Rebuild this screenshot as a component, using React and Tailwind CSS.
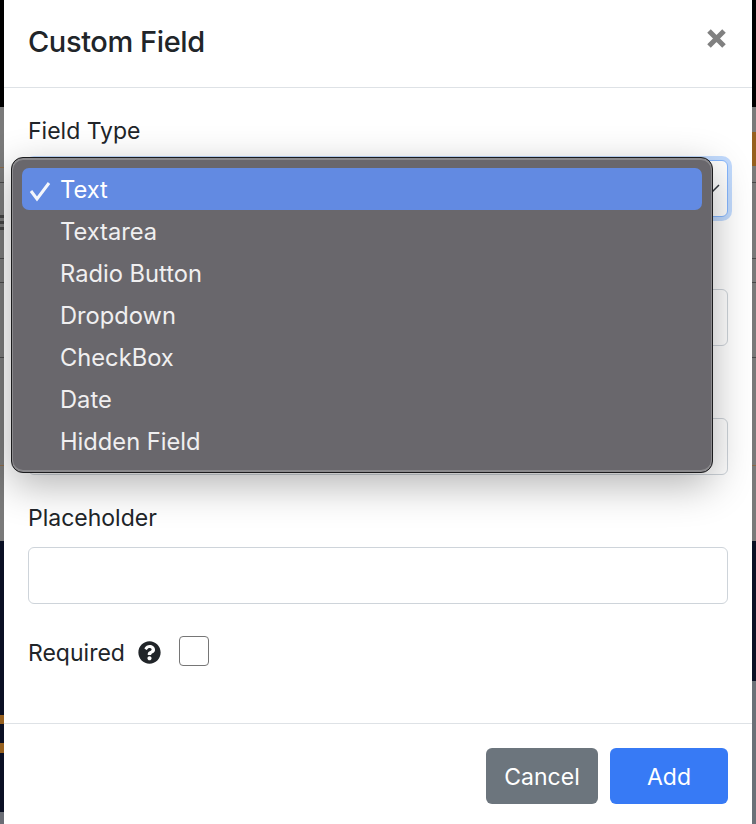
import React from 'react';
import { FaQuestionCircle } from 'react-icons/fa';

const options = ['Textarea', 'Radio Button', 'Dropdown', 'CheckBox', 'Date', 'Hidden Field'];

const Line = ({ className }) => <div className={`h-px shrink-0 ${className}`}></div>;

const LeftStrip = () => (
  <div className="w-[4px] h-full shrink-0 flex flex-col bg-[#7a7a7a]">
    <div className="h-[107px] shrink-0 bg-black"></div>
    <div className="h-[60px] shrink-0"></div>
    <Line className="bg-[#8a6a4a]" />
    <div className="h-[14px] shrink-0"></div>
    <Line className="bg-[#4a4a4a]" />
    <div className="h-[32px] shrink-0"></div>
    <div className="h-[3px] shrink-0 bg-[#444444]"></div>
    <div className="h-[3px] shrink-0 mt-[3px] bg-[#444444]"></div>
    <div className="h-[3px] shrink-0 mt-[3px] bg-[#444444]"></div>
    <div className="h-[28px] shrink-0"></div>
    <Line className="bg-[#4a4a4a]" />
    <div className="h-[23px] shrink-0"></div>
    <Line className="bg-[#4a4a4a]" />
    <div className="h-[74px] shrink-0"></div>
    <Line className="bg-[#4a4a4a]" />
    <div className="h-[107px] shrink-0"></div>
    <Line className="bg-[#8a6a4a]" />
    <div className="h-[75px] shrink-0"></div>
    <div className="flex-1 flex flex-col bg-[#0a1024]">
      <div className="h-[174px] shrink-0"></div>
      <div className="h-[9px] shrink-0 bg-[#96601f]"></div>
      <div className="h-[19px] shrink-0"></div>
      <div className="h-[10px] shrink-0 bg-[#96601f]"></div>
      <div className="h-[59px] shrink-0"></div>
      <div className="flex-1 bg-[#6a6d75]"></div>
    </div>
  </div>
);

const RightStrip = () => (
  <div className="w-[4px] h-full shrink-0 flex flex-col bg-[#7a7a7a]">
    <div className="h-[107px] shrink-0 bg-black"></div>
    <div className="h-[25px] shrink-0"></div>
    <div className="h-[34px] shrink-0 bg-[#96601f]"></div>
    <div className="h-[16px] shrink-0"></div>
    <Line className="bg-[#4a4a4a]" />
    <div className="h-[75px] shrink-0"></div>
    <Line className="bg-[#4a4a4a]" />
    <div className="h-[23px] shrink-0"></div>
    <Line className="bg-[#4a4a4a]" />
    <div className="h-[74px] shrink-0"></div>
    <Line className="bg-[#4a4a4a]" />
    <div className="h-[107px] shrink-0"></div>
    <Line className="bg-[#8a6a4a]" />
    <div className="h-[75px] shrink-0"></div>
    <div className="h-[140px] shrink-0 bg-[#0a1024]"></div>
    <div className="flex-1 bg-[#6b7178]"></div>
  </div>
);

const Field = ({ label, children }) => (
  <div className="mb-6">
    <div className="h-9 mb-3 pt-[1px] leading-9">{label}</div>
    {children}
  </div>
);

const TextInput = () => (
  <div className="h-[57px] rounded-[6px] border border-[#ced4da] bg-white"></div>
);

const SelectMenu = () => (
  <div className="absolute left-[7px] top-[157px] w-[702px] h-[316px] p-[10px] rounded-[12px] border border-[#1c1c1e] bg-[#69676c] text-[23.7px] text-[#f0eff0] shadow-[inset_0_1px_0_1px_#8b8a8d,inset_0_-1px_0_1px_#8b8a8d,0_12px_40px_rgba(0,0,0,0.3)]">
    <div className="h-[42px] flex items-center rounded-[7px] bg-[#628ae2] text-white">
      <svg className="w-[38px] h-[42px] shrink-0" viewBox="0 0 38 42" fill="none">
        <path d="M9 23l6 8L27 15" stroke="#f4f6fb" strokeWidth="3" />
      </svg>
      <span className="pt-[2px]">Text</span>
    </div>
    {options.map((o) => (
      <div key={o} className="h-[42px] flex items-center pt-[2px] pl-[38px]">{o}</div>
    ))}
  </div>
);

export default function App() {
  return (
    <div className="w-[756px] h-[824px] overflow-hidden flex bg-[#7a7a7a] text-[23px] text-[#212529] font-['Inter','Liberation_Sans',sans-serif]">
      <LeftStrip />

      <div className="relative w-[748px] h-full shrink-0 flex flex-col bg-white">
        <div className="h-[88px] shrink-0 flex items-center justify-between pl-6 pr-[26px] border-b border-[#dee2e6]">
          <h5 className="mb-[4px] text-[29px] leading-[45px] tracking-[-0.4px] font-medium">Custom Field</h5>
          <svg className="mb-[10px] w-[19px] h-[19px]" viewBox="0 0 19 19" fill="none">
            <path d="M2 2l15 15M17 2L2 17" stroke="#808080" strokeWidth="5" />
          </svg>
        </div>

        <div className="h-[635px] shrink-0 p-6">
          <Field label="Field Type">
            <div className="h-[57px] flex items-center justify-end pr-[7px] rounded-[6px] border border-[#86b7fe] bg-white shadow-[0_0_0_4px_rgba(13,110,253,0.25)]">
              <svg className="w-[18px] h-[10px]" viewBox="0 0 18 10" fill="none">
                <path d="M1 1l8 8 8-8" stroke="#343a40" strokeWidth="1.5" />
              </svg>
            </div>
          </Field>
          <Field>
            <TextInput />
          </Field>
          <Field>
            <TextInput />
          </Field>
          <Field label="Placeholder">
            <TextInput />
          </Field>
          <div className="h-9 flex items-start">
            <span className="leading-9 mt-[7px]">Required</span>
            <FaQuestionCircle className="ml-[13px] mt-[13px] w-[23px] h-[23px] text-[#212529]" />
            <div className="ml-[18px] mt-2 w-[30px] h-[30px] rounded-[4px] border border-[#767676] bg-white"></div>
          </div>
        </div>

        <div className="flex-1 flex justify-end items-start gap-3 pt-6 pr-6 border-t border-[#dee2e6]">
          <button className="w-[112px] h-[56px] pt-[3px] rounded-[6px] bg-[#6c757d] text-white">Cancel</button>
          <button className="w-[118px] h-[56px] pt-[3px] rounded-[6px] bg-[#377af5] text-white">Add</button>
        </div>

        <SelectMenu />
      </div>

      <RightStrip />
    </div>
  );
}
